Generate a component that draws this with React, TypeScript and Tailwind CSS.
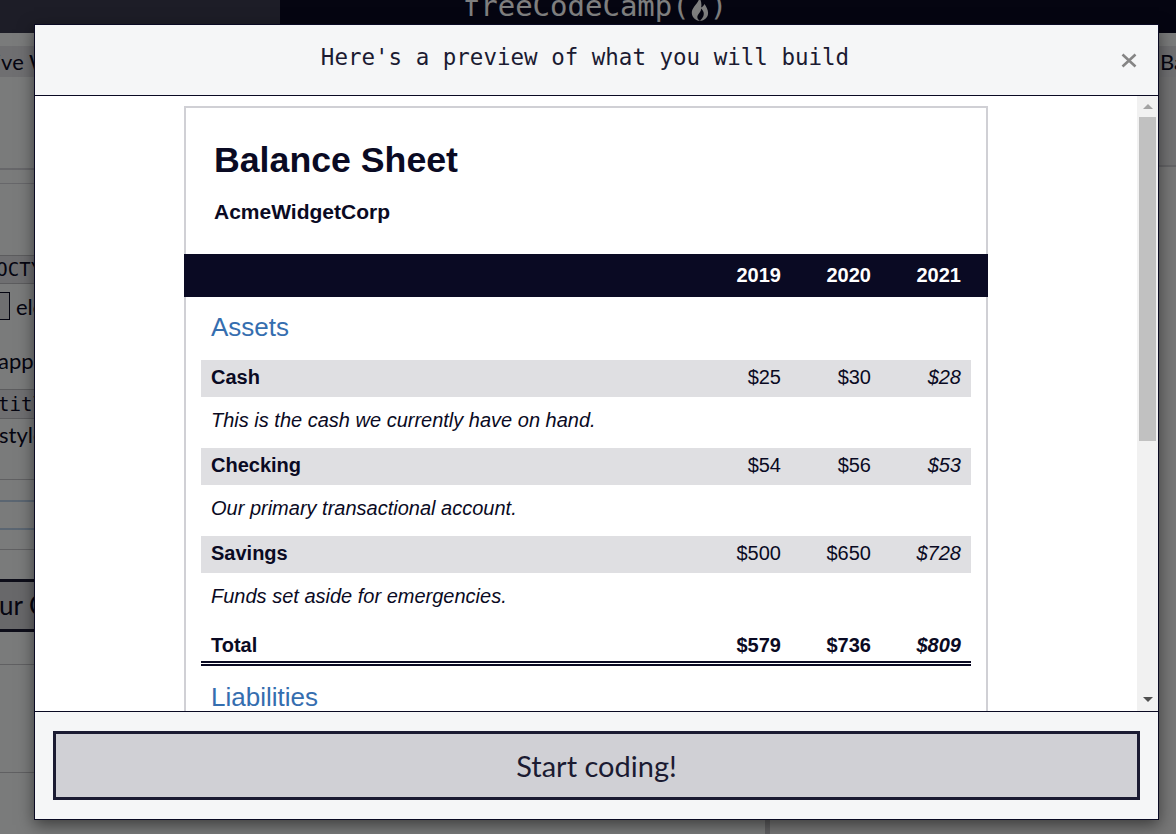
import React from "react";

type Item = { name: string; desc: string; values: string[] };

const years = ["2019", "2020", "2021"];

const assets: Item[] = [
  { name: "Cash", desc: "This is the cash we currently have on hand.", values: ["$25", "$30", "$28"] },
  { name: "Checking", desc: "Our primary transactional account.", values: ["$54", "$56", "$53"] },
  { name: "Savings", desc: "Funds set aside for emergencies.", values: ["$500", "$650", "$728"] },
];

const liabilities: Item[] = [
  { name: "Loans", desc: "The outstanding balance on our startup loan.", values: ["$500", "$250", "$0"] },
  { name: "Expenses", desc: "Annual anticipated expenses, such as payroll.", values: ["$200", "$300", "$400"] },
];

function Values({ values }: { values: string[] }) {
  return (
    <>
      <span className="w-[90px] shrink-0 pr-[5px] text-right">{values[0]}</span>
      <span className="w-[90px] shrink-0 pr-[5px] text-right">{values[1]}</span>
      <span className="w-[95px] shrink-0 pr-[10px] text-right italic">{values[2]}</span>
    </>
  );
}

function Table({ caption, items, total }: { caption: string; items: Item[]; total?: string[] }) {
  return (
    <div>
      <p className="pb-[18px] pl-[10px] pt-[15px] text-[26px] leading-[30px] text-[#356eaf]">{caption}</p>
      {items.map((item) => (
        <div key={item.name}>
          <div className="flex h-[37px] bg-[#dfdfe2] pt-[6px]">
            <span className="flex-1 pl-[10px] font-bold">{item.name}</span>
            <Values values={item.values} />
          </div>
          <p className="pb-[16px] pl-[10px] pt-[12px] italic">{item.desc}</p>
        </div>
      ))}
      {total && (
        <div className="flex border-b-[5px] border-double border-[#0a0a23] pb-[4px] pt-[10px] font-bold">
          <span className="flex-1 pl-[10px]">Total</span>
          <Values values={total} />
        </div>
      )}
    </div>
  );
}

function Preview() {
  return (
    <section className="mx-auto w-[804px] border-2 border-[#d0d0d5] font-['Liberation_Sans',Arial,sans-serif] text-[#0a0a23]">
      <h1 className="pb-[30px] pl-[28px] pt-[31px] font-bold">
        <span className="block text-[35.7px] leading-[42px]">Balance Sheet</span>
        <span className="mt-[19px] block text-[21px] leading-[24px]">AcmeWidgetCorp</span>
      </h1>
      <div className="-mx-[2px] flex h-[43px] items-center justify-end bg-[#0a0a23] pr-[27px] text-[20px] font-bold leading-[23px] text-white">
        {years.map((y) => (
          <span key={y} className="w-[90px] text-right">
            {y}
          </span>
        ))}
      </div>
      <div className="px-[15px] pb-[30px] text-[20px] leading-[23px]">
        <Table caption="Assets" items={assets} total={["$579", "$736", "$809"]} />
        <div className="pt-px">
          <Table caption="Liabilities" items={liabilities} />
        </div>
      </div>
    </section>
  );
}

function Scrollbar() {
  return (
    <div className="flex w-[21px] shrink-0 flex-col bg-[#f1f1f1]">
      <div className="flex h-[21px] items-center justify-center">
        <svg width="10" height="5" viewBox="0 0 10 5">
          <polygon points="0,5 5,0 10,5" fill="#a3a3a3" />
        </svg>
      </div>
      <div className="flex-1 px-[2px]">
        <div className="h-[324px] bg-[#c1c1c1]" />
      </div>
      <div className="flex h-[21px] items-center justify-center pb-[2px]">
        <svg width="10" height="5" viewBox="0 0 10 5">
          <polygon points="0,0 10,0 5,5" fill="#505050" />
        </svg>
      </div>
    </div>
  );
}

function Modal() {
  return (
    <div className="absolute left-[34px] top-[24px] flex h-[796px] w-[1125px] flex-col border border-[#0a0a23] bg-white shadow-[0_5px_15px_rgba(0,0,0,0.5)]">
      <header className="flex h-[71px] shrink-0 items-center border-b border-[#0a0a23] bg-[#f5f6f7] pb-[4px] pl-[15px] pr-[21px]">
        <h2 className="flex-1 text-center font-['DejaVu_Sans_Mono',monospace] text-[22.5px] text-[#1b1b32]">
          Here's a preview of what you will build
        </h2>
        <button className="mt-[5px] flex h-[17px] w-[17px] items-center justify-center">
          <svg width="16" height="15" viewBox="0 0 16 15">
            <path d="M1.5 1.5 L14.5 13.5 M14.5 1.5 L1.5 13.5" stroke="#858585" strokeWidth="2.6" />
          </svg>
        </button>
      </header>
      <div className="flex min-h-0 flex-1">
        <div className="min-w-0 flex-1 overflow-hidden pt-[10px]">
          <Preview />
        </div>
        <Scrollbar />
      </div>
      <footer className="shrink-0 border-t border-[#0a0a23] bg-[#f5f6f7] px-[18px] py-[19px]">
        <button className="flex h-[69px] w-full items-center justify-center border-[3px] border-[#1b1b32] bg-[#d0d0d5] font-['Lato',sans-serif] text-[29px] text-[#1b1b32]">
          Start coding!
        </button>
      </footer>
    </div>
  );
}

function Background() {
  return (
    <div className="flex h-full flex-col">
      <nav className="flex h-[33px] shrink-0 bg-[#0a0a23]">
        <div className="w-[280px] shrink-0 bg-[#3b3b4f]" />
        <div className="flex flex-1 justify-center overflow-hidden pr-[266px]">
          <div className="-mt-[8px] flex h-[40px] whitespace-nowrap font-['DejaVu_Sans_Mono',monospace] text-[29px] leading-[29px] text-white">
            <span>freeCodeCamp(</span>
            <svg className="mt-[3px]" width="20" height="27" viewBox="0 0 18 24">
              <path d="M8 1c1 4-2 6-4 9s-3 5-2 8c1 3 4 5 7 5-2-1-3-3-2-5 1-2 3-3 3-6 2 2 3 4 2 7-1 2-2 3-3 4 3 0 6-2 7-5 1-4-1-7-3-10-1 2-2 3-3 3 1-4-1-8-2-10z" fill="#ffffff" />
            </svg>
            <span>)</span>
          </div>
        </div>
      </nav>
      <div className="h-[13px] shrink-0" />
      <div className="flex h-[31px] shrink-0 items-center whitespace-nowrap bg-[#dfdfe2] text-[22px]">
        <div className="w-[1160px] shrink-0 overflow-hidden">
          <span className="-ml-[85px] block">Responsive Web Design</span>
        </div>
        <span>Balance Sheet</span>
      </div>
      <div className="flex min-h-0 flex-1">
        <div className="flex w-[765px] shrink-0 flex-col overflow-hidden whitespace-nowrap text-[22px]">
          <div className="h-[91px] shrink-0" />
          <div className="h-[16px] shrink-0 border-b border-t-2 border-[#cfcfd4]" />
          <div className="h-[71px] shrink-0" />
          <div className="flex h-[29px] shrink-0 items-center border-y border-[#b8b8bd] bg-[#dfdfe2] font-['DejaVu_Sans_Mono',monospace] text-[19px]">
            <span className="-ml-[38px]">&lt;!DOCTYPE html&gt;</span>
          </div>
          <div className="h-[8px] shrink-0" />
          <div className="flex h-[28px] shrink-0 items-center">
            <span className="-ml-[40px] h-[28px] w-[50px] shrink-0 border border-[#0a0a23] bg-[#dfdfe2]" />
            <span className="ml-[6px]">element</span>
          </div>
          <div className="flex h-[57px] shrink-0 items-end">
            <span className="-ml-[2px]">appropriate</span>
          </div>
          <div className="h-[12px] shrink-0" />
          <div className="flex h-[30px] shrink-0 items-center border-y border-[#b8b8bd] bg-[#dfdfe2] font-['DejaVu_Sans_Mono',monospace] text-[19px]">
            <span className="-ml-[2px]">title</span>
          </div>
          <div className="flex h-[31px] shrink-0 items-center">
            <span className="-ml-[1px]">styles</span>
          </div>
          <div className="h-[30px] shrink-0 border-b border-[#c0c0c5]" />
          <div className="h-[22px] shrink-0 border-b-2 border-[#b7cde4]" />
          <div className="h-[28px] shrink-0 border-b-2 border-[#b7cde4]" />
          <div className="h-[20px] shrink-0 border-b border-[#c0c0c5]" />
          <div className="h-[29px] shrink-0" />
          <div className="flex h-[53px] shrink-0 items-center border-y-[3px] border-[#1b1b32] bg-[#d0d0d5] text-[26px]">
            <span className="-ml-[106px]">Check Your Code</span>
          </div>
          <div className="h-[33px] shrink-0 border-b border-[#c0c0c5]" />
          <div className="h-[108px] shrink-0 border-b border-[#c0c0c5]" />
        </div>
        <div className="w-[5px] shrink-0 bg-[#c0c0c5]" />
        <div className="flex flex-1 flex-col">
          <div className="h-[90px] shrink-0 border-b-2 border-[#c8c8cd] bg-[#e2e2e4]" />
          <div className="flex-1 bg-[#eeeeee]" />
        </div>
      </div>
    </div>
  );
}

export default function App() {
  return (
    <div className="relative h-[834px] w-[1176px] overflow-hidden bg-[#f5f6f7] font-['Lato',sans-serif] text-[#0a0a23]">
      <Background />
      <div className="absolute inset-0 bg-black/50" />
      <Modal />
    </div>
  );
}
